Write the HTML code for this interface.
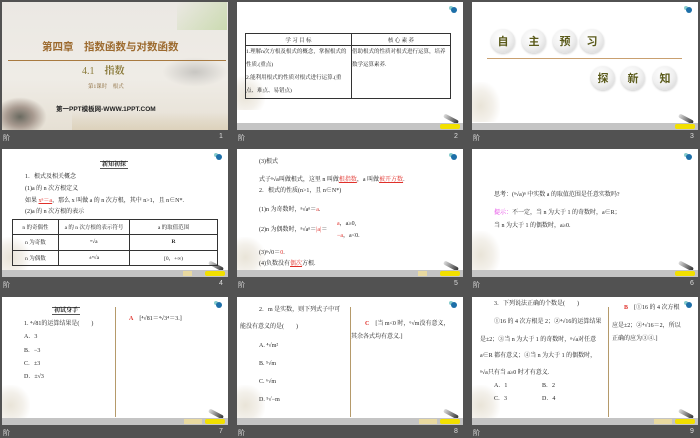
<!DOCTYPE html>
<html><head><meta charset="utf-8"><style>
*{margin:0;padding:0;box-sizing:border-box}
body{width:700px;height:438px;background:#525252;position:relative;overflow:hidden;font-family:"Liberation Serif","Noto Serif CJK SC","Noto Sans CJK SC",serif;color:#222}
.s{position:absolute;width:226px;height:128px;background:#fff;overflow:hidden}
.s .bar{position:absolute;left:0;bottom:0;width:100%;height:7px;background:#c4c4c4}
.s .btn{position:absolute;bottom:1px;right:3px;width:20px;height:5px;background:#f2e000;border-radius:2px}
.s .btn2{position:absolute;bottom:1px;right:26px;width:18px;height:5px;background:#e8d9a0}
.s .ic{position:absolute;top:5px;right:6px;width:6px;height:6px;border-radius:50%;background:#1d6fa8;box-shadow:-3px -2px 0 -1px #8cc}
.s .pen{position:absolute;right:4px;bottom:9px;width:16px;height:4px;background:linear-gradient(90deg,#ddd,#333);transform:rotate(28deg);border-radius:2px}
.s .fl{position:absolute;left:0;bottom:6px;width:28px;height:34px;background:radial-gradient(ellipse at 30% 60%,#e9e4d8 0,#f3f0ea 45%,rgba(255,255,255,0) 75%)}
.lb{position:absolute;color:#ddd;font-size:7px;font-family:"Liberation Sans","Noto Sans CJK SC",sans-serif}
.t{position:absolute;font-size:6px;white-space:nowrap;line-height:1}
.r{color:#e0302a}
.vl{position:absolute;top:10px;width:1px;height:110px;background:#b59a6a}
table{border-collapse:collapse;position:absolute}
td{border:1px solid #333;font-size:5.5px;text-align:center}
.circ{position:absolute;width:24px;height:24px;border-radius:50%;background:radial-gradient(circle at 40% 35%,#fff 0,#f0f0f0 50%,#cfcfcf 100%);font-size:11px;font-weight:bold;color:#5a5a1a;text-align:center;line-height:24px;font-family:"Noto Sans CJK SC",sans-serif;box-shadow:0 1px 2px rgba(0,0,0,.2)}
</style></head><body>

<!-- slide 1 -->
<div class="s" style="left:2px;top:2px;background:linear-gradient(180deg,#ebe8e3 0,#efece6 60%,#e6e0d4 100%)">
 <div style="position:absolute;left:175px;top:0;width:50px;height:28px;background:linear-gradient(135deg,rgba(255,255,255,0),rgba(140,190,80,.35))"></div>
 <div style="position:absolute;left:160px;top:55px;width:66px;height:30px;background:radial-gradient(ellipse,#c8c6c2 0,rgba(230,228,224,0) 70%)"></div>
 <div style="position:absolute;left:0;top:95px;width:45px;height:33px;background:radial-gradient(ellipse at 40% 60%,#6a6a60 0,#a89a90 35%,rgba(230,225,215,0) 70%)"></div>
 <div style="position:absolute;left:70px;top:110px;width:156px;height:18px;background:linear-gradient(180deg,rgba(230,220,200,0),#ddd2bc)"></div>
 <div class="t" style="left:40px;top:40px;font-size:10.5px;font-weight:bold;color:#9c6a2e;font-family:'Liberation Sans','Noto Sans CJK SC',sans-serif">第四章　指数函数与对数函数</div>
 <div style="position:absolute;left:6px;top:58px;width:218px;height:1px;background:#a87a40"></div>
 <div class="t" style="left:80px;top:65px;font-size:10px;color:#8a7a3a">4.1　<b>指数</b></div>
 <div class="t" style="left:86px;top:83px;font-size:5.5px;color:#8a6a3a">第1课时　根式</div>
 <div class="t" style="left:54px;top:105px;font-size:6.5px;font-weight:bold;color:#222;font-family:'Liberation Sans','Noto Sans CJK SC',sans-serif">第一PPT模板网-WWW.1PPT.COM</div>
</div>
<div class="lb" style="left:3px;top:133px">阶</div><div class="lb" style="left:219px;top:133px">1</div>

<!-- slide 2 -->
<div class="s" style="left:237px;top:2px">
 <div class="ic"></div><div class="fl" style="bottom:20px"></div><div class="pen"></div><div class="bar"></div><div class="btn"></div>
 <table style="left:8px;top:31px;width:206px;height:64px">
  <tr style="height:12px"><td style="width:106px">学 习 目 标</td><td>核 心 素 养</td></tr>
  <tr><td style="text-align:left;line-height:13px;vertical-align:top">1.理解n次方根及根式的概念，掌握根式的性质.(重点)<br>2.能利用根式的性质对根式进行运算.(重点、难点、易错点)</td><td style="text-align:left;vertical-align:top;line-height:13px">借助根式的性质对根式进行运算，培养数学运算素养.</td></tr>
 </table>
</div>
<div class="lb" style="left:238px;top:133px">阶</div><div class="lb" style="left:454px;top:133px">2</div>

<!-- slide 3 -->
<div class="s" style="left:472px;top:2px">
 <div class="ic"></div><div class="fl" style="height:40px;bottom:8px"></div><div class="pen"></div><div class="bar"></div><div class="btn"></div>
 <div class="circ" style="left:19px;top:27px">自</div><div class="circ" style="left:50px;top:27px">主</div><div class="circ" style="left:81px;top:27px">预</div><div class="circ" style="left:108px;top:27px">习</div>
 <div style="position:absolute;left:15px;top:56px;width:195px;height:1px;background:#c9a070"></div>
 <div class="circ" style="left:119px;top:64px">探</div><div class="circ" style="left:149px;top:64px">新</div><div class="circ" style="left:181px;top:64px">知</div>
</div>
<div class="lb" style="left:473px;top:133px">阶</div><div class="lb" style="left:690px;top:133px">3</div>

<!-- slide 4 -->
<div class="s" style="left:2px;top:149px">
 <div class="ic"></div><div class="fl"></div><div class="pen"></div><div class="bar"></div><div class="btn"></div><div class="btn2" style="width:9px;right:36px"></div>
 <div class="t" style="left:98px;top:12px;font-weight:bold;border-top:1px solid #555;border-bottom:1px solid #555;padding:0 2px">新知初探</div>
 <div class="t" style="left:23px;top:25px">1．根式及相关概念</div>
 <div class="t" style="left:23px;top:37px">(1)a 的 n 次方根定义</div>
 <div class="t" style="left:23px;top:49px">如果 <span class="r" style="text-decoration:underline">xⁿ＝a</span>，那么 x 叫做 a 的 n 次方根，其中 n&gt;1，且 n∈N*.</div>
 <div class="t" style="left:23px;top:60px">(2)a 的 n 次方根的表示</div>
 <table style="left:10px;top:70px;width:206px;height:47px">
  <tr><td style="width:46px">n 的奇偶性</td><td style="width:71px">a 的 n 次方根的表示符号</td><td>a 的取值范围</td></tr>
  <tr><td>n 为奇数</td><td>ⁿ√a</td><td><b>R</b></td></tr>
  <tr><td>n 为偶数</td><td>±ⁿ√a</td><td>[0，+∞)</td></tr>
 </table>
</div>
<div class="lb" style="left:3px;top:280px">阶</div><div class="lb" style="left:219px;top:280px">4</div>

<!-- slide 5 -->
<div class="s" style="left:237px;top:149px">
 <div class="ic"></div><div class="fl"></div><div class="pen"></div><div class="bar"></div><div class="btn"></div><div class="btn2" style="width:9px;right:36px"></div>
 <div class="t" style="left:22px;top:10px">(3)根式</div>
 <div class="t" style="left:22px;top:28px">式子ⁿ√a叫做根式，这里 n 叫做<span class="r" style="text-decoration:underline">根指数</span>，a 叫做<span class="r" style="text-decoration:underline">被开方数</span>.</div>
 <div class="t" style="left:22px;top:39px">2．根式的性质(n&gt;1，且 n∈N*)</div>
 <div class="t" style="left:22px;top:58px">(1)n 为奇数时，ⁿ√aⁿ＝<span class="r">a</span>.</div>
 <div class="t" style="left:22px;top:78px">(2)n 为偶数时，ⁿ√aⁿ＝<span class="r">|a|</span>＝</div>
 <div class="t" style="left:100px;top:72px"><span class="r">a</span>，a≥0,</div>
 <div class="t" style="left:100px;top:84px"><span class="r">−a</span>，a&lt;0.</div>
 <div class="t" style="left:22px;top:101px">(3)ⁿ√0＝<span class="r">0</span>.</div>
 <div class="t" style="left:22px;top:112px">(4)负数没有<span class="r" style="text-decoration:underline">偶次</span>方根.</div>
</div>
<div class="lb" style="left:238px;top:280px">阶</div><div class="lb" style="left:454px;top:280px">5</div>

<!-- slide 6 -->
<div class="s" style="left:472px;top:149px">
 <div class="ic"></div><div class="fl" style="height:40px"></div><div class="pen"></div><div class="bar"></div><div class="btn"></div>
 <div class="t" style="left:22px;top:43px">思考：(ⁿ√a)ⁿ 中实数 a 的取值范围是任意实数吗?</div>
 <div class="t" style="left:22px;top:61px"><span style="color:#e020e0">提示：</span>不一定，当 n 为大于 1 的奇数时，a∈R；</div>
 <div class="t" style="left:22px;top:74px">当 n 为大于 1 的偶数时，a≥0.</div>
</div>
<div class="lb" style="left:473px;top:280px">阶</div><div class="lb" style="left:690px;top:280px">6</div>

<!-- slide 7 -->
<div class="s" style="left:2px;top:297px">
 <div class="ic"></div><div class="fl"></div><div class="pen"></div><div class="bar"></div><div class="btn"></div><div class="btn2"></div>
 <div class="vl" style="left:113px"></div>
 <div class="t" style="left:50px;top:10px;font-weight:bold;border-top:1px solid #555;border-bottom:1px solid #555;padding:0 2px">初试身手</div>
 <div class="t" style="left:22px;top:24px">1. ⁴√81的运算结果是(　　)</div>
 <div class="t" style="left:22px;top:37px">A．3</div>
 <div class="t" style="left:22px;top:51px">B．−3</div>
 <div class="t" style="left:22px;top:64px">C．±3</div>
 <div class="t" style="left:22px;top:77px">D．±√3</div>
 <div class="t" style="left:127px;top:19px"><span class="r" style="font-weight:bold">A</span>　[⁴√81＝⁴√3⁴＝3.]</div>
</div>
<div class="lb" style="left:3px;top:428px">阶</div><div class="lb" style="left:219px;top:428px">7</div>

<!-- slide 8 -->
<div class="s" style="left:237px;top:297px">
 <div class="ic"></div><div class="fl"></div><div class="pen"></div><div class="bar"></div><div class="btn"></div><div class="btn2"></div>
 <div class="vl" style="left:113px"></div>
 <div class="t" style="left:22px;top:10px">2．m 是实数，则下列式子中可</div>
 <div class="t" style="left:3px;top:27px">能没有意义的是(　　)</div>
 <div class="t" style="left:22px;top:46px">A. ⁴√m²</div>
 <div class="t" style="left:22px;top:64px">B. ⁵√m</div>
 <div class="t" style="left:22px;top:82px">C. ⁶√m</div>
 <div class="t" style="left:22px;top:100px">D. ⁵√−m</div>
 <div class="t" style="left:128px;top:24px"><span class="r" style="font-weight:bold">C</span>　[当 m&lt;0 时，⁶√m没有意义，</div>
 <div class="t" style="left:114px;top:37px">其余各式均有意义.]</div>
</div>
<div class="lb" style="left:238px;top:428px">阶</div><div class="lb" style="left:454px;top:428px">8</div>

<!-- slide 9 -->
<div class="s" style="left:472px;top:297px">
 <div class="ic"></div><div class="fl"></div><div class="pen"></div><div class="bar"></div><div class="btn"></div><div class="btn2"></div>
 <div class="vl" style="left:136px"></div>
 <div class="t" style="left:22px;top:4px">3．下列说法正确的个数是(　　)</div>
 <div class="t" style="left:22px;top:22px">①16 的 4 次方根是 2；②⁴√16的运算结果</div>
 <div class="t" style="left:8px;top:40px">是±2；③当 n 为大于 1 的奇数时，ⁿ√a对任意</div>
 <div class="t" style="left:8px;top:56px">a∈R 都有意义；④当 n 为大于 1 的偶数时，</div>
 <div class="t" style="left:8px;top:73px">ⁿ√a只有当 a≥0 时才有意义.</div>
 <div class="t" style="left:22px;top:86px">A．1</div><div class="t" style="left:70px;top:86px">B．2</div>
 <div class="t" style="left:22px;top:99px">C．3</div><div class="t" style="left:70px;top:99px">D．4</div>
 <div class="t" style="left:152px;top:8px"><span class="r" style="font-weight:bold">B</span>　[①16 的 4 次方根</div>
 <div class="t" style="left:140px;top:26px">应是±2；②⁴√16＝2，所以</div>
 <div class="t" style="left:140px;top:39px">正确的应为③④.]</div>
</div>
<div class="lb" style="left:473px;top:428px">阶</div><div class="lb" style="left:690px;top:428px">9</div>

</body></html>
